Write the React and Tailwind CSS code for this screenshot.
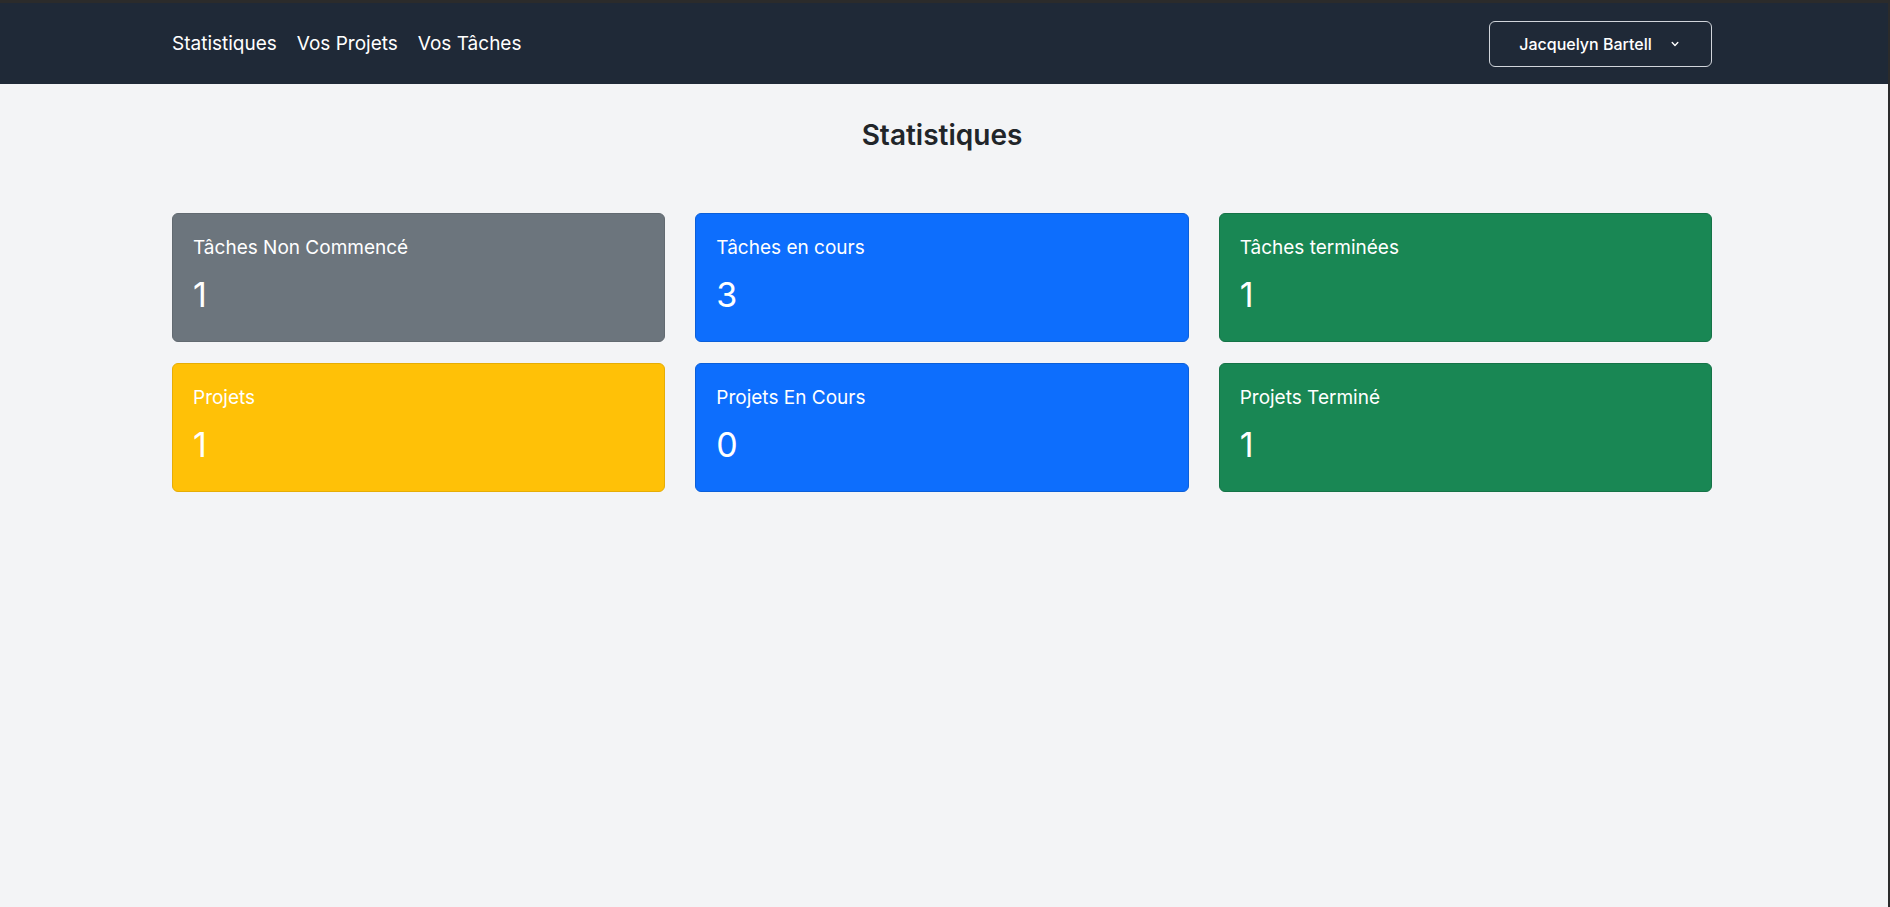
import React from 'react';

const stats = [
  { label: 'Tâches Non Commencé', value: 1, color: 'bg-[#6c757d] border-[#626a71]' },
  { label: 'Tâches en cours', value: 3, color: 'bg-[#0d6efd] border-[#0b5fd9]' },
  { label: 'Tâches terminées', value: 1, color: 'bg-[#198754] border-[#157347]' },
  { label: 'Projets', value: 1, color: 'bg-[#ffc107] border-[#e6ad06]' },
  { label: 'Projets En Cours', value: 0, color: 'bg-[#0d6efd] border-[#0b5fd9]' },
  { label: 'Projets Terminé', value: 1, color: 'bg-[#198754] border-[#157347]' },
];

function StatCard({ label, value, color }) {
  return (
    <div className={`h-[129px] rounded-[6px] border px-5 pt-[22px] text-white ${color}`}>
      <p className="text-[19px] leading-[24px]">{label}</p>
      <p className="mt-[15px] text-[34px] font-normal leading-[40px]">{value}</p>
    </div>
  );
}

export default function App() {
  return (
    <div className="min-h-[907px] bg-[#2b2b2b] pt-[3px] pr-[2px] font-['Inter',sans-serif]">
      <div className="min-h-[904px] bg-[#f3f4f6]">
        {/* navbar */}
        <nav className="flex h-[81px] items-center bg-[#1f2937] pl-[172px] pr-[176px]">
          <div className="flex items-center gap-[20px] pt-[2px] text-[19px] text-white">
            <a href="#">Statistiques</a>
            <a href="#">Vos Projets</a>
            <a href="#">Vos Tâches</a>
          </div>
          <button className="ml-auto flex h-[46px] w-[223px] items-center justify-center gap-[16px] rounded-[6px] border border-[#d1d5db] pt-[1px] text-[16px] font-medium text-white">
            Jacquelyn Bartell
            <svg width="14" height="14" viewBox="0 0 20 20" fill="currentColor">
              <path fillRule="evenodd" d="M5.293 7.293a1 1 0 011.414 0L10 10.586l3.293-3.293a1 1 0 111.414 1.414l-4 4a1 1 0 01-1.414 0l-4-4a1 1 0 010-1.414z" clipRule="evenodd" />
            </svg>
          </button>
        </nav>

        <main className="pl-[172px] pr-[176px]">
          <h1 className="pt-[33px] text-center text-[28px] font-semibold leading-[36px] text-[#212529]">Statistiques</h1>
          <div className="mt-[60px] grid grid-cols-3 gap-x-[30px] gap-y-[21px]">
            {stats.map((s) => (
              <StatCard key={s.label} {...s} />
            ))}
          </div>
        </main>
      </div>
    </div>
  );
}
